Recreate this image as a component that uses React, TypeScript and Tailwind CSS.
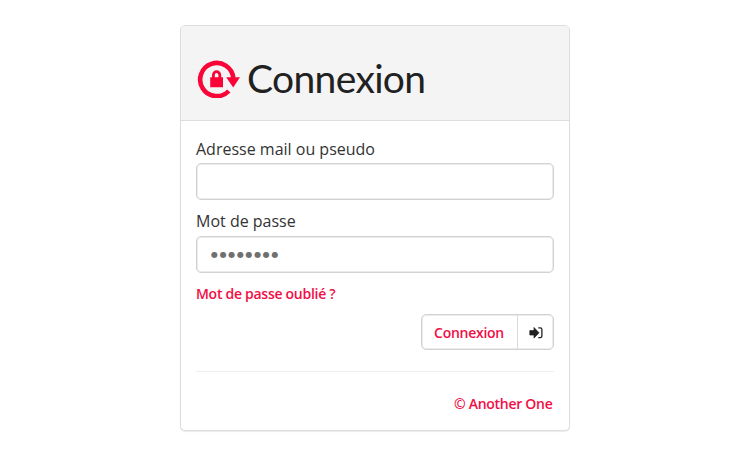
import { useState } from "react";

function LockIcon() {
  return (
    <svg width="43" height="39" viewBox="0 0 43 39" className="shrink-0">
      <path d="M31.8 32 A16.6 16.6 0 1 1 36.3 19" fill="none" stroke="#f90537" strokeWidth="4.6" />
      <path d="M29.2 18.2 H43 L36.2 28.6 Z" fill="#f90537" />
      <path d="M13.2 18.2 H26 V28.2 H13.2 Z" fill="#f90537" />
      <path d="M16.4 19 V15.9 A3.2 3.2 0 0 1 22.8 15.9 V19" fill="none" stroke="#f90537" strokeWidth="2.8" />
    </svg>
  );
}

function SignInIcon() {
  return (
    <svg width="14" height="13" viewBox="0 0 14 13">
      <path d="M0.8 4.6 H5 V1.5 L10 6.8 L5 12.1 V9 H0.8 Z" fill="#212121" stroke="#212121" strokeWidth="0.7" strokeLinejoin="round" />
      <path d="M9.3 1.9 H11.2 Q12.9 1.9 12.9 3.6 V10 Q12.9 11.7 11.2 11.7 H9.3" fill="none" stroke="#212121" strokeWidth="1.3" />
    </svg>
  );
}

export default function App() {
  const [login, setLogin] = useState("");
  const [password, setPassword] = useState("");

  return (
    <main className="min-h-screen bg-white pt-[25px] font-['Open_Sans',sans-serif] text-base text-[#333333]">
      <div className="mx-auto flex h-[406px] w-[390px] flex-col overflow-hidden rounded-[5px] border border-[#dddddd] bg-white shadow-[0_1px_1px_rgba(0,0,0,0.08)]">
        <header className="flex h-[95px] shrink-0 items-center border-b border-[#dddddd] bg-[#f4f4f4] pl-4 pt-2.5">
          <LockIcon />
          <h1 className="ml-[7px] font-['Lato',sans-serif] text-[39px] leading-[44px] tracking-[-0.65px] text-[#212121]">Connexion</h1>
        </header>

        <form className="flex flex-col px-[15px] pt-4" onSubmit={(e) => e.preventDefault()}>
          <label htmlFor="login" className="h-[26px] leading-6">Adresse mail ou pseudo</label>
          <input
            id="login"
            type="text"
            value={login}
            onChange={(e) => setLogin(e.target.value)}
            className="h-[37px] w-full rounded-[5px] border border-[#d2d2d2] px-3.5 shadow-[inset_0_0_0_1px_#ebebeb] outline-none"
          />

          <label htmlFor="password" className="mt-[9px] h-[27px] leading-6">Mot de passe</label>
          <input
            id="password"
            type="password"
            value={password}
            onChange={(e) => setPassword(e.target.value)}
            placeholder="●●●●●●●●"
            className="h-[37px] w-full rounded-[5px] border border-[#d2d2d2] px-3.5 font-['DejaVu_Sans',sans-serif] text-[8px] tracking-[1.65px] shadow-[inset_0_0_0_1px_#ebebeb] outline-none placeholder:text-[#707070]"
          />

          <a href="#" className="mt-[11px] text-sm leading-5 font-semibold tracking-[-0.28px] text-[#f20d45]">Mot de passe oublié ?</a>

          <div className="mt-[10px] flex justify-end">
            <button type="submit" className="flex h-9 w-[133px] items-center rounded-[5px] border border-[#d2d2d2] bg-white shadow-[inset_0_0_0_1px_#ebebeb]">
              <span className="flex h-full w-[96px] items-center justify-center border-r border-[#dadada] pt-px pr-px text-sm font-semibold tracking-[-0.28px] text-[#f20d45]">Connexion</span>
              <span className="flex flex-1 justify-center">
                <SignInIcon />
              </span>
            </button>
          </div>
        </form>

        <footer className="mx-[15px] mt-[21px] border-t border-[#eeeeee] pt-[22px] pr-[1.5px] text-right text-sm leading-5 font-semibold tracking-[-0.28px] text-[#f20d45]">
          <a href="#">© Another One</a>
        </footer>
      </div>
    </main>
  );
}
